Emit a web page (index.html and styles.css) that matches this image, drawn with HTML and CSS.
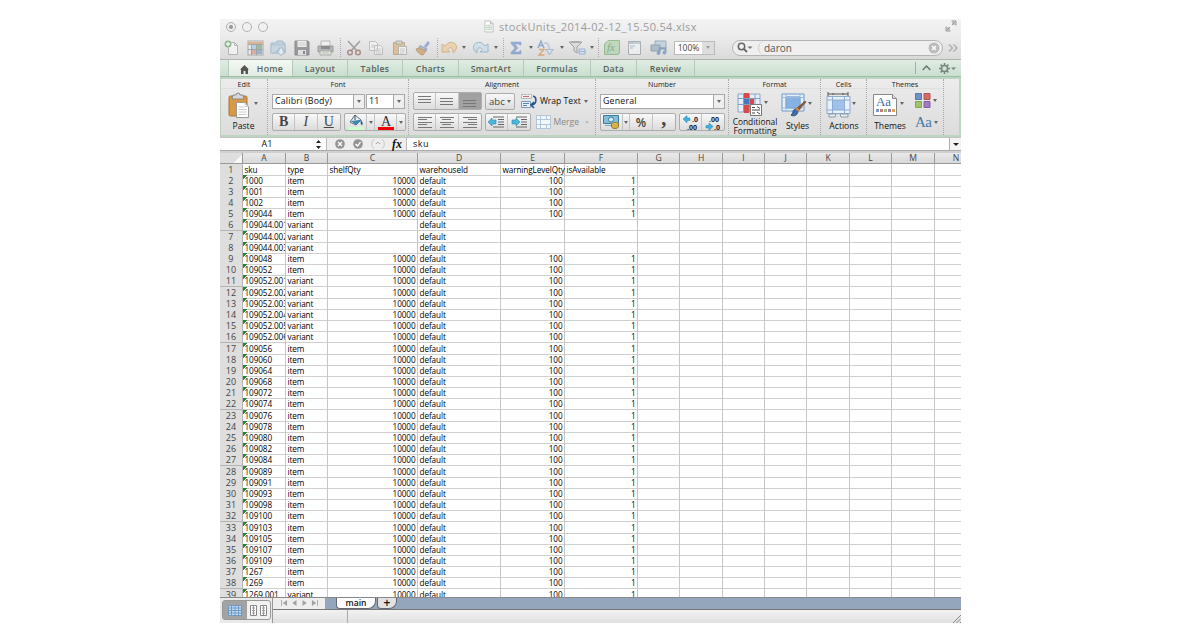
FILE: index.html
```html
<!DOCTYPE html>
<html lang="en">
<head>
<meta charset="utf-8">
<title>stockUnits_2014-02-12_15.50.54.xlsx</title>
<link rel="stylesheet" href="styles.css">
</head>
<body>
<main class="window">
  <header class="titlebar">
    <div class="lights"><i class="light dot"></i><i class="light"></i><i class="light"></i></div>
    <div class="title"><svg width="10" height="13" viewBox="0 0 11 13"><path d="M1 .5h6l3 3v9H1z" fill="#fff" stroke="#bbb"/><path d="M7 .5v3h3" fill="#ddd" stroke="#bbb"/><path d="M3 5h5v5H3zM3 7.5h5M5.500 5v5" fill="none" stroke="#bcd3be"/></svg><span>stockUnits_2014-02-12_15.50.54.xlsx</span></div>
    <svg class="expand" width="12" height="12" viewBox="0 0 12 12"><path d="M6.500 1h4.500v4.500M11 1 7 5M8 1v3h3M1 6.500V11h4.500M1 11l4-4M1 8h3v3" fill="none" stroke="#999"/></svg>
  </header>

  <div class="toolbar">
    <svg class="ghost" width="16" height="16" viewBox="0 0 16 16"><path d="M4.500 2.500h6l3 3v9h-9z" fill="#fafafa" stroke="#999"/><path d="M10.500 2.500v3h3" fill="none" stroke="#999"/><circle cx="4" cy="4" r="3.500" fill="#5f9d63"/><path d="M4 2v4M2 4h4" stroke="#fff" stroke-width="1.300"/></svg>
    <svg class="ghost" width="17" height="16" viewBox="0 0 17 16"><rect x="1" y="1" width="15" height="14" fill="#eee" stroke="#888"/><path d="M1 2h15v2H1z" fill="#d5955a"/><path d="M5 5h4v4H5z" fill="#9cc2dd"/><path d="M10 5h5v4h-5z" fill="#6aa873"/><path d="M5 10h4v4H5z" fill="#d88d7a"/><path d="M10 10h5v4h-5z" fill="#6b9bc9"/><path d="M1 4.500h15M1 9.500h15M4.500 4v11M9.500 4v11" stroke="#7a8084" fill="none"/></svg>
    <svg class="ghost" width="17" height="16" viewBox="0 0 17 16"><path d="M1 3h5l1-2h6v2h2v10H1z" fill="#a9c2d6" stroke="#86a4bd"/><path d="M1 5h14v8H1z" fill="#b8cfe0" stroke="#8eacc4"/><path d="M9 8h4v3h2.500l-4.500 4.500L6.500 11H9z" fill="#e7f1f8" stroke="#6b9bc0"/></svg>
    <svg class="ghost" width="16" height="16" viewBox="0 0 16 16"><path d="M1 1h13l1 1v13H1z" fill="#6d6d74" stroke="#55555c"/><path d="M3.500 1h9v6h-9z" fill="#f2f2f2"/><path d="M4 10h8v5H4z" fill="#ddd"/><path d="M9 11h2v3H9z" fill="#555"/><path d="M4.500 3h7M4.500 5h7" stroke="#bbb"/></svg>
    <svg class="ghost" width="17" height="16" viewBox="0 0 17 16"><path d="M4 1h9v6H4z" fill="#f7f7f7" stroke="#999"/><path d="M1 6h15v6H1z" fill="#999" stroke="#777"/><path d="M4 6h9v3H4z" fill="#555"/><path d="M3 11h11v4H3z" fill="#eef2e9" stroke="#888"/><path d="M5 13h7" stroke="#8bb07b"/></svg>
    <i class="sep"></i>
    <svg class="ghost" width="16" height="16" viewBox="0 0 16 16"><path d="M2 1 11 11M14 1 5 11" stroke="#777" stroke-width="1.600"/><circle cx="4" cy="12.500" r="2.300" fill="none" stroke="#905a50" stroke-width="1.500"/><circle cx="12" cy="12.500" r="2.300" fill="none" stroke="#905a50" stroke-width="1.500"/></svg>
    <svg class="ghost" width="16" height="16" viewBox="0 0 16 16"><path d="M1.500 1.500h6l2 2v7h-8zM6.500 5.500h6l2 2v7h-8z" fill="#f7f7f7" stroke="#aaa"/><path d="M3 5h3M3 7h3M8 9h5M8 11h5M8 13h5" stroke="#bbb"/></svg>
    <svg class="ghost" width="16" height="16" viewBox="0 0 16 16"><path d="M1.500 2.500h11v12h-11z" fill="#d9ac6c" stroke="#a98858"/><path d="M4 1h6v3H4z" fill="#ccc" stroke="#888"/><path d="M6.500 6.500h8v8h-8z" fill="#f9f9f9" stroke="#999"/><path d="M8 9h5M8 11h5M8 13h4" stroke="#bbb"/></svg>
    <svg class="ghost" width="16" height="16" viewBox="0 0 16 16"><path d="m9 6 4-5 2 2-4 5z" fill="#6c8ac8"/><path d="M5 5.500 12 9l-1 2-7-3z" fill="#8fa3d2" stroke="#6b7899"/><path d="M4 8 1 9c1 3 4 6 7 6l3-4z" fill="#c69050" stroke="#a27640"/></svg>
    <i class="sep"></i>
    <svg class="ghost" width="18" height="14" viewBox="0 0 18 14"><path d="M1 3v8h8L6.500 8.500C9 5.500 12.500 6 12 12c6-4 4-12-4-10.500L4 5z" fill="#f0c892" stroke="#c99553"/></svg><i class="arr"></i>
    <svg class="ghost" width="18" height="14" viewBox="0 0 18 14"><path d="M17 3v8H9l2.500-2.500C9 5.500 5.500 6 6 12 0 8 2 0 10 1.500L14 5z" fill="#c5dced" stroke="#6fa0c2"/></svg><i class="arr"></i>
    <i class="sep"></i>
    <svg class="ghost" width="12" height="14" viewBox="0 0 12 14"><path d="M1 1h10v3H9.500L9 3H5l3 4-4 4h5.500l.5-1.500h1V13H1v-1.500L5 7 1 2.500z" fill="#6589c9" stroke="#557ab8" stroke-width=".5"/></svg><i class="arr"></i>
    <svg class="ghost" width="18" height="16" viewBox="0 0 18 16"><path d="m1 8 3-7 3 7M2 5.500h4" fill="none" stroke="#5e86bd" stroke-width="1.400"/><path d="M2 9.500h5L2 15h5.500" fill="none" stroke="#cf8a3e" stroke-width="1.400"/><path d="M7 3c4-1 5 2 5.500 7M9 9.500l3.500 5 3.500-5z" stroke="#88a7c7" fill="#dbe6f0" stroke-width="1.200"/></svg><i class="arr"></i>
    <svg class="ghost" width="18" height="16" viewBox="0 0 18 16"><path d="M1 2h13L9 7v6l-3-2V7z" fill="#d4d6d8" stroke="#777"/><path d="M3 2h9" stroke="#666"/><path d="M11 9h6v5h-6zM11 11.500h6" fill="#d7e5f2" stroke="#6a97c6"/></svg><i class="arr"></i>
    <i class="sep"></i>
    <svg class="ghost" width="16" height="15" viewBox="0 0 16 15"><path d="M4 .5h11.500V12a2.500 2.500 0 0 1-2.500 2.500H.5V4z" fill="#a9d0a6" stroke="#62a05f"/><text x="3" y="11" font-family="Liberation Serif" font-style="italic" font-size="11" fill="#4b8a4b">fx</text></svg>
    <svg class="ghost" width="14" height="16" viewBox="0 0 14 16"><path d="M.5 1.500h12v13H.5z" fill="#f3f4f5" stroke="#8a8e92"/><path d="M1 2h11v2H1z" fill="#b0bcc8"/><path d="M2 3h3M2 6h5M2 8h3" stroke="#8aa0b7"/></svg>
    <svg class="ghost" width="17" height="16" viewBox="0 0 17 16"><path d="M5 1h11v7H5z" fill="#b3c9d9" stroke="#6d8ba2"/><path d="M1 5h9v6H1z" fill="#8ca4b5" stroke="#627d92"/><path d="M9.500 13V8.500h6V12" fill="none" stroke="#4a79b0" stroke-width="1.800"/><circle cx="8.500" cy="13" r="2" fill="#5d86ba"/><circle cx="14.500" cy="12.500" r="2" fill="#5d86ba"/></svg>
    <div class="zoom"><span>100%</span><b><i class="arr"></i></b></div>
    <div class="search"><div class="lens"><svg width="16" height="11" viewBox="0 0 16 11"><circle cx="4.500" cy="4.500" r="3.200" fill="none" stroke="#666" stroke-width="1.500"/><path d="m7 7 3 3" stroke="#666" stroke-width="1.800"/><path d="M10.500 4.500h5L13 7z" fill="#777"/></svg></div><div class="query">daron</div><svg width="12" height="12" viewBox="0 0 12 12"><circle cx="6" cy="6" r="5.500" fill="#bbb"/><path d="m4 4 4 4m0-4L4 8" stroke="#fff" stroke-width="1.400"/></svg></div>
    <svg width="10" height="8" viewBox="0 0 10 8"><path d="m1 .5 3.500 3.500L1 7.500M5.500.5 9 4 5.500 7.500" fill="none" stroke="#aaa" stroke-width="1.300"/></svg>
  </div>

  <nav class="tabs">
    <span class="lead"></span>
    <span class="tab home"><svg width="9" height="9" viewBox="0 0 9 9"><path d="M4.500 0 9 4.500H8V9H5.500V6h-2v3H1V4.500H0z" fill="#555"/></svg>Home</span>
    <span class="tab t55">Layout</span><span class="tab t55">Tables</span><span class="tab t56">Charts</span><span class="tab t65">SmartArt</span><span class="tab t67">Formulas</span><span class="tab t46">Data</span><span class="tab t58">Review</span>
    <span class="tabtools"><svg width="9" height="6" viewBox="0 0 9 6"><path d="m.7 5 3.800-4 3.800 4" fill="none" stroke="#66736a" stroke-width="1.400"/></svg><svg width="17" height="11" viewBox="0 0 17 11"><circle cx="5.500" cy="5.500" r="3" fill="none" stroke="#77827a" stroke-width="1.500"/><path d="M5.500 0v2m0 7v2M0 5.500h2m7 0h2M1.600 1.600 3 3m5 5 1.400 1.400M9.400 1.600 8 3M3 8 1.600 9.400" stroke="#77827a" stroke-width="1.500"/><path d="M12 4.500h5L14.500 7z" fill="#77827a"/></svg></span>
  </nav>

  <section class="ribbon">
    <div class="group edit"><h2>Edit</h2>
      <div class="big"><div class="icons"><svg width="22" height="27" viewBox="0 0 22 27"><rect x="1" y="4" width="18" height="20" rx="1.500" fill="#d89b43" stroke="#a87430"/><path d="M5 3h3a2 2 0 0 1 4 0h3l1 4H4z" fill="#d5d7da" stroke="#888"/><path d="M8.500 10.500H17l3.500 4v11h-12z" fill="#fff" stroke="#999"/><path d="M17 10.500v4h3.500M10.500 15h6M10.500 17.500h8M10.500 20h8M10.500 22.500h8" fill="none" stroke="#ccc"/></svg><i class="arr"></i></div><p>Paste</p></div>
    </div>
    <div class="group font"><h2>Font</h2>
      <div class="row"><div class="combo name"><span>Calibri (Body)</span><b><i class="arr"></i></b></div><div class="combo size"><span>11</span><b><i class="arr"></i></b></div></div>
      <div class="row"><div class="seg biu"><span class="w22"><b>B</b></span><span class="w22"><i>I</i></span><span class="w22"><u>U</u></span></div>
        <div class="seg"><span class="w22"><svg width="16" height="16" viewBox="0 0 16 16"><path d="m7 1 6 5-5 5-6-3z" fill="#e8f1f7" stroke="#4d6f86"/><path d="m3 7 8-1 2 0-5 5z" fill="#3d86b0"/><path d="M13 6c2 2 2 5 1 5s-2-2-1-5" fill="#1b5d8a"/><path d="M7 1v5" stroke="#444"/><path d="M0 13h16v3H0z" fill="#ccffcc"/></svg></span><span class="w8"><i class="arr"></i></span><span class="w22"><svg width="16" height="16" viewBox="0 0 16 16"><text x="3" y="11.500" font-family="Liberation Serif" font-size="14" fill="#333">A</text><path d="M0 13h16v3H0z" fill="#f00000"/></svg></span><span class="w8"><i class="arr"></i></span></div></div>
    </div>
    <div class="group align"><h2>Alignment</h2>
      <div class="row"><div class="seg"><span class="w22"><i class="ln up"></i></span><span class="w22"><i class="ln"></i></span><span class="w22 on"><i class="ln low"></i></span></div><div class="seg abc"><span>abc<i class="arr"></i></span></div>
        <div class="tool"><svg width="17" height="16" viewBox="0 0 17 16"><path d="M.5 1.500h10v4H.5z" fill="#f4eded" stroke="#99a9bd" stroke-dasharray="2 1"/><path d="M2 3.500h6" stroke="#c96c6c"/><path d="M.5 8.500h9v6h-9z" fill="#eaf1fa" stroke="#789abf"/><path d="M2 10.500h6M2 12.500h4" stroke="#5880b0"/><path d="M12 3c4 1 4 8-1 9M13 9l-3 3 3 3" fill="none" stroke="#26558e" stroke-width="1.600"/></svg><span>Wrap Text</span><i class="arr"></i></div></div>
      <div class="row"><div class="seg"><span class="w22"><i class="ln four left"></i></span><span class="w22"><i class="ln four mid"></i></span><span class="w22"><i class="ln four right"></i></span></div>
        <div class="seg"><span class="w22"><svg width="17" height="12" viewBox="0 0 17 12"><path d="M5 1h11M10 3.500h6M10 6h6M10 8.500h6M5 11h11" stroke="#666"/><path d="M0 6 4 2v2h4v4H4v2z" fill="#4eb7dc" stroke="#2589b2" stroke-width=".6"/></svg></span><span class="w22"><svg width="17" height="12" viewBox="0 0 17 12"><path d="M5 1h11M10 3.500h6M10 6h6M10 8.500h6M5 11h11" stroke="#666"/><path d="m9 6-4-4v2H1v4h4v2z" fill="#4eb7dc" stroke="#2589b2" stroke-width=".6"/></svg></span></div>
        <div class="tool off"><svg width="16" height="14" viewBox="0 0 16 14"><path d="M.5.5h14v13H.5zM.5 4.500h14M.5 9.500h14M4.500.5v13M10.500.5v4m0 5v4" fill="#f2f7fb" stroke="#b3c6d8"/></svg><span>Merge</span><i class="arr"></i></div></div>
    </div>
    <div class="group number"><h2>Number</h2>
      <div class="row"><div class="combo general"><span>General</span><b><i class="arr"></i></b></div></div>
      <div class="row"><div class="seg"><span class="w22"><svg width="17" height="14" viewBox="0 0 17 14"><path d="M.5.5h15v8H.5z" fill="#86bdd9" stroke="#397b9e"/><circle cx="8" cy="4.500" r="2.500" fill="#d8edf6" stroke="#397b9e"/><path d="M2 10.500h6" stroke="#8aa"/><ellipse cx="12" cy="9" rx="3.500" ry="1.500" fill="#e7c75b" stroke="#94782c"/><path d="M8.500 9v3c1 2 6 2 7 0V9" fill="#d8b04a" stroke="#94782c"/></svg></span><span class="w7"><i class="arr"></i></span><span class="w22 pct">%</span><span class="w22 comma">,</span></div>
        <div class="seg dec"><span class="w22"><svg width="18" height="15" viewBox="0 0 18 15"><path d="M1 4 5 .5V3h3v2.500H5V8z" fill="#41aedb" stroke="#2388b1" stroke-width=".5"/><text x="10" y="7">.0</text><text x="5" y="14.500">.00</text></svg></span><span class="w22"><svg width="18" height="15" viewBox="0 0 18 15"><text x="5" y="7">.00</text><path d="m9 11.500-4-3.500v2.500H2V13h3v2.500z" fill="#41aedb" stroke="#2388b1" stroke-width=".5"/><text x="10" y="14.500">.0</text></svg></span></div></div>
    </div>
    <div class="group format"><h2>Format</h2>
      <div class="pair"><div class="big two"><div class="icons"><svg width="26" height="25" viewBox="0 0 26 25"><path d="M1 2h22v18H1z" fill="#e5f0fa" stroke="#8aa6c6"/><path d="M7 1h5v6H7zM7 13h5v8H7z" fill="#d84a47"/><path d="M7 7h10v6H7z" fill="#4778be"/><path d="M12 7h5v6h-5z" fill="#d84a47"/><path d="M1 6.500h22M1 12.500h22M6.500 2v18M12.500 2v18M18 2v18" stroke="#7f9fc3" fill="none"/><path d="M13.500 12.500h11v11h-11z" fill="#fff" stroke="#777"/><path d="M15 15.500h3m2-1 3 2M15 18h8M15 21h3m2-1 3 2" stroke="#444" fill="none"/></svg><i class="arr"></i></div><p>Conditional<br>Formatting</p></div>
      <div class="big sty"><div class="icons"><svg width="27" height="26" viewBox="0 0 27 26"><path d="M1 2h22v17H1z" fill="#e5f0fa" stroke="#6f97c7"/><path d="M5 5h14v11H5z" fill="#85b2e4" stroke="#5685bd"/><path d="M5 2v17M19 2v17M1 5.500h22M1 16h22" stroke="#9bb9db" fill="none"/><path d="m25 10-8 9-2-2 9-8z" fill="#8b5a34" stroke="#5f3b1d" stroke-width=".6"/><path d="M15 17c-4 0-2 4-5 6 3 2 7 0 7-4z" fill="#3c6fae" stroke="#274c7c"/><path d="m15 16 3 3" stroke="#d98c35" stroke-width="2"/></svg><i class="arr"></i></div><p>Styles</p></div></div>
    </div>
    <div class="group cells"><h2>Cells</h2>
      <div class="big"><div class="icons"><svg width="26" height="26" viewBox="0 0 26 26"><path d="M1 4.500h23v17H1z" fill="#e7f1fb" stroke="#8fabcf"/><path d="M6 8h13v10H6z" fill="#9fc2ea"/><path d="M6.500 4v18M18.500 4v18M1 8h23M1 18h23" stroke="#8fabcf" fill="none"/><path d="M2 2h20M2 0v4M22 0v4M7 1v2M17 1v2" stroke="#555"/><path d="M3 22h7l-1 3H3zM14 22h8v3h-7z" fill="#eee" stroke="#8599ad"/></svg><i class="arr"></i></div><p>Actions</p></div>
    </div>
    <div class="group themes"><h2>Themes</h2>
      <div class="pair"><div class="big"><div class="icons"><svg width="25" height="22" viewBox="0 0 25 22"><path d="M.5.500h19l4 4v17H.5z" fill="#fff" stroke="#888"/><path d="M19.500.500v4h4" fill="#ddd" stroke="#888"/><text x="3" y="12" font-family="Liberation Serif" font-size="13" fill="#386ea6" textLength="15">Aa</text><path d="M3 15h3v3H3z" fill="#7c96c9"/><path d="M7 15h3v3H7z" fill="#c97979"/><path d="M11 15h3v3h-3z" fill="#9fbc6f"/><path d="M15 15h3v3h-3z" fill="#9b7db8"/><path d="M19 15h3v3h-3z" fill="#e0a252"/></svg><i class="arr"></i></div><p>Themes</p></div>
      <div class="mini"><div><svg width="16" height="15" viewBox="0 0 16 15"><path d="M.5.500h6v6h-6z" fill="#6f93c4" stroke="#547bad"/><path d="M9 .500h6v6H9z" fill="#d66c6a" stroke="#b5504f"/><path d="M.5 8.500h6v6h-6z" fill="#a0c46b" stroke="#80a64f"/><path d="M9 8.500h6v6H9z" fill="#a37bc0" stroke="#845da2"/></svg><i class="arr"></i></div><div><em>Aa</em><i class="arr"></i></div></div></div>
    </div>
  </section>

  <div class="formula">
    <div class="ref">A1</div>
    <svg class="stepper" width="5" height="9" viewBox="0 0 5 9"><path d="M2.500 0 5 3H0zM2.500 9 5 6H0z" fill="#222"/></svg>
    <div class="fxtools"><svg width="10" height="10" viewBox="0 0 10 10"><circle cx="5" cy="5" r="4.800" fill="#949494"/><path d="m3 3 4 4m0-4L3 7" stroke="#fff" stroke-width="1.300"/></svg><svg width="10" height="10" viewBox="0 0 10 10"><circle cx="5" cy="5" r="4.800" fill="#949494"/><path d="m2.500 5 2 2 3-4" stroke="#fff" stroke-width="1.300" fill="none"/></svg><svg width="14" height="12" viewBox="0 0 14 12"><path d="M3 1C0 4 0 8 3 11M11 1c3 3 3 7 0 10" fill="none" stroke="#c5c5c5"/><path d="M5 6c1-2 3-2 4 0" stroke="#999" fill="none"/></svg><strong>fx</strong></div>
    <div class="value">sku</div><b class="drop"><i class="arr dark"></i></b>
  </div>

  <div class="sheet" id="sheet"></div>

  <footer class="footer">
    <div class="views"><div class="viewbox"><span class="sel"><svg width="14" height="11" viewBox="0 0 14 11"><path d="M.5.500h13v10H.5zM.5 3h13M.5 5.500h13M.5 8h13M3.500.500v10M7 .500v10M10.500.500v10" fill="#c4ddf3" stroke="#6e99c3"/></svg></span><span><svg width="17" height="11" viewBox="0 0 17 11"><path d="M.5.500h6v10h-6zM10.500.500h6v10h-6z" fill="#fff" stroke="#888"/><path d="M2 3h3M2 5.500h3M2 8h3M12 3h3M12 5.500h3M12 8h3M3.500 1v9M13.500 1v9" stroke="#999"/></svg></span></div></div>
    <div class="bottom">
      <div class="sheettabs"><div class="nav"><svg width="43" height="6" viewBox="0 0 43 7"><path d="M0 0h1v7H0zM7 0v7L2 3.500zM18 0v7l-5-3.500zM25 0v7l5-3.500zM36 0v7l5-3.500zM42 0h1v7h-1z" fill="#a2a2a2"/></svg></div>
        <div class="stabs"><span class="stab">main</span><span class="stab plus">+</span></div></div>
      <div class="status"><span></span><svg width="9" height="9" viewBox="0 0 9 9"><path d="m0 9 9-9M3.500 9 9 3.500M7 9l2-2" stroke="#888"/></svg></div>
    </div>
  </footer>
</main>
<script src="sheet.js"></script>
</body>
</html>
```
FILE: styles.css
```css
* { box-sizing: border-box; }
body { margin: 0; background: #fff; font-family: "Open Sans", "Noto Sans", sans-serif; color: #111; }
svg { display: block; flex: none; overflow: visible; }
h2, p { margin: 0; font-weight: 400; }
.window { width: 741px; height: 604px; margin: 19px 0 0 220px; display: flex; flex-direction: column; overflow: hidden; }
.arr { display: block; flex: none; width: 0; height: 0; border: 2.5px solid transparent; border-top: 3.500px solid #666; border-bottom: 0; }
.arr.dark { border-top-color: #222; border-left-width: 3px; border-right-width: 3px; }

.titlebar { height: 17px; flex: none; background: linear-gradient(#f3f3f3, #ececec); display: grid; grid-template-columns: 264px 1fr 16px; }
.lights { display: flex; gap: 6px; padding: 3px 0 0 6px; }
.light { width: 10px; height: 10px; border: 1px solid #b0b0b0; border-radius: 50%; background: #f0f0f0; }
.light.dot { background: radial-gradient(#999 1.500px, #eee 2.500px); }
.title { display: flex; gap: 5px; align-items: center; height: 15px; color: #9c9c9c; font-size: 11px; letter-spacing: .32px; white-space: nowrap; }
.expand { margin-top: 1px; }

.toolbar { height: 24px; flex: none; background: linear-gradient(#ececec, #dadada); display: grid; align-items: center; justify-items: center; border-bottom: 1px solid #b0b5b1;
  grid-template-columns: 23px 24px 23px 24px 23px 6px 21px 24px 23px 24px 5px 20px 8px 23px 9px 6px 20px 9px 22px 9px 22px 8px 5px 22px 24px 23px 49px 228px 12px; }
.ghost { opacity: .62; }
.sep { width: 0; height: 19px; border-left: 1px dotted #aaa; }
.zoom { width: 41px; height: 14px; display: flex; background: #fff; border: 1px solid #bbb; font-size: 8.500px; line-height: 12px; color: #444; }
.zoom span { flex: 1; text-align: center; }
.zoom b { width: 12px; background: #ddd; display: grid; place-items: center; }
.zoom .arr { border-top-color: #999; }
.search { width: 211px; height: 16px; border: 1px solid #b4b4b4; border-radius: 8px; background: #efefef; display: flex; align-items: center; justify-self: end; margin-right: 4px; padding-right: 2px; }
.lens { width: 25px; padding-left: 4px; }
.query { flex: 1; height: 14px; border-left: 1px solid #ccc; border-radius: 7px 0 0 7px; padding-left: 5px; font-size: 10px; line-height: 14px; color: #555; }

.tabs { height: 17px; flex: none; display: flex; background: linear-gradient(#e0ece2, #c9dfcf); border-bottom: 1px solid #9fbca7; font-size: 8.700px; font-weight: 600; color: #58615b; letter-spacing: .3px; }
.lead { width: 9px; border-right: 1px solid #b7ccbc; }
.tab { display: flex; align-items: center; justify-content: center; border-right: 1px solid #b4c9ba; padding-top: 2px; }
.home { width: 64px; gap: 8px; padding-left: 2px; background: linear-gradient(#f3f8f3, #e2ece3); }
.t55 { width: 55px; } .t56 { width: 56px; } .t65 { width: 65px; } .t67 { width: 67px; } .t46 { width: 46px; } .t58 { width: 58px; }
.tabtools { margin: 2px 3px 2px auto; width: 43px; border-left: 1px solid #9eb0a3; display: flex; align-items: center; gap: 8px; padding-left: 6px; }

.ribbon { height: 60px; flex: none; display: flex; background: linear-gradient(#ececec, #dcdcdc); border: 2px solid #bdd4c3; border-width: 2px 2px 2px 1px; }
.group { border-right: 1px dotted #a8a8a8; display: flex; flex-direction: column; padding: 1px 0 0 4px; }
.group h2 { height: 9px; line-height: 9px; font-size: 7.200px; text-align: center; color: #222; margin: 0 0 0 -4px; flex: none; border-bottom: 1px solid #e0e0e0; }
.edit { width: 47px; } .font { width: 141px; } .align { width: 187px; } .number { width: 133px; } .format { width: 92px; } .cells { width: 46px; } .themes { width: 77px; }
.row { display: flex; height: 18px; align-items: center; margin-top: 3px; flex: none; }
.combo { height: 15px; border: 1px solid #a9a9a9; background: #fff; display: flex; font-size: 8.800px; line-height: 13px; color: #111; }
.combo span { flex: 1; padding-left: 2px; white-space: nowrap; letter-spacing: .2px; }
.combo b { width: 11px; border-left: 1px solid #aaa; background: #efefef; display: grid; place-items: center; }
.name { width: 93px; margin-right: 1px; } .size { width: 39px; } .general { width: 125px; }
.seg { height: 18px; display: flex; border: 1px solid #adadad; border-radius: 2px; background: linear-gradient(#f8f8f8, #dcdcdc); margin-right: 3px; }
.seg span { display: flex; align-items: center; justify-content: center; border-right: 1px solid #c3c3c3; }
.seg span:last-child { border-right: 0; }
.w22 { width: 22.300px; } .w8 { width: 8px; } .w7 { width: 7px; }
.biu { font: 14px "Liberation Serif", serif; color: #444; }
.seg .on { background: #a1a1a1; }
.ln { display: block; width: 13px; height: 7px; background: repeating-linear-gradient(#777 0 1px, transparent 1px 3px); }
.up { margin-bottom: 4px; } .low { margin-top: 5px; }
.ln.four { height: 11px; width: 14px; background: linear-gradient(#777, #777) 0 0/14px 1px, linear-gradient(#777, #777) 0 2.500px/9px 1px, linear-gradient(#777, #777) 0 5px/14px 1px, linear-gradient(#777, #777) 0 7.500px/9px 1px, linear-gradient(#777, #777) 0 10px/14px 1px; background-repeat: no-repeat; }
.ln.mid { background-position: 50% 0, 50% 2.500px, 50% 5px, 50% 7.500px, 50% 10px; }
.ln.right { background-position: 100% 0, 100% 2.500px, 100% 5px, 100% 7.500px, 100% 10px; }
.abc { width: 30px; height: 17px; font-size: 9.500px; color: #444; }
.abc span { gap: 2px; width: 28px; }
.tool { display: flex; align-items: center; gap: 2px; margin-left: 3px; font-size: 8.600px; white-space: nowrap; }
.tool .arr { margin-left: 1px; }
.tool.off { color: #888; gap: 1px; margin-left: 2px; } .off .arr { border-top-color: #bbb; margin-left: 5px; }
.pct { font-size: 12px; color: #444; font-weight: 600; } .comma { font: bold 20px/4px "Liberation Serif", serif; color: #444; padding-bottom: 9px; }
.dec { font: bold 7px "Open Sans", sans-serif; }
.dec text { fill: #222; }
.big { display: flex; flex-direction: column; font-size: 8.600px; }
.icons { height: 30px; display: flex; align-items: center; gap: 4px; padding-top: 2px; flex: none; }
.icons .arr { margin-top: -3px; }
.big p { line-height: 11px; text-align: center; white-space: nowrap; margin-left: -4px; padding-top: 2px; }
.pair { display: flex; }
.edit .icons { padding-left: 3px; } .edit p { padding-right: 1px; }
.two { width: 48px; } .two .icons { padding-left: 4px; gap: 1px; height: 28px; } .two p { font-size: 8.400px; line-height: 8.500px; margin-left: -4px; padding-top: 1px; }
.sty { width: 39px; } .sty .icons { gap: 0; } .sty p { margin-left: -6px; }
.cells .icons { padding-left: 1px; gap: 0; } .cells p { margin-left: -3px; }
.themes .big { width: 43px; } .themes .icons { padding-left: 2px; gap: 2px; } .themes p { margin-left: 0; padding-right: 5px; }
.mini { padding-left: 1px; }
.mini div { height: 22px; display: flex; align-items: center; gap: 2px; }
.mini em { font: 15px "Liberation Serif", serif; color: #4878a8; letter-spacing: -.500px; width: 17px; }

.formula { height: 14px; flex: none; display: flex; align-items: center; background: #fff; border-bottom: 1px solid #aaa; border-top: 1px solid #c4c4c4; font-size: 9px; line-height: 12px; }
.ref { width: 94px; text-align: center; } .stepper { margin: 0 5px 0 2px; }
.fxtools { width: 81px; height: 12px; background: #eee; border: solid #bbb; border-width: 0 1px; display: flex; align-items: center; gap: 8px; padding-left: 8px; }
.fxtools strong { font: italic bold 12px/12px "Liberation Serif", serif; margin-left: -1px; }
.value { flex: 1; padding-left: 6px; letter-spacing: .5px; }
.drop { width: 12px; height: 12px; border-left: 1px solid #aaa; display: grid; place-items: center; background: #f4f4f4; }

.sheet { height: 446px; flex: none; overflow: hidden; border-top: 2px solid #d0d0d0; background: #fff; }
.line { display: grid; height: 11.200px; grid-template-columns: 23px 43px 42px 90px 83px 64px 73px 42px 43px 42px 42px 43px 42px 43px 26px; }
.line span { border-right: 1px solid #c6c6c6; border-bottom: 1px solid #cfcfcf; font: 500 8.200px/11px "Open Sans", sans-serif; letter-spacing: -.1px; color: #000; white-space: nowrap; padding-left: 1.500px; min-width: 0; }
.line span:last-child { border-right: 0; }
.line .num { text-align: right; padding: 0 1.500px 0 0; }
.line .rh { background: #dedede; color: #444; text-align: center; font-size: 9px; letter-spacing: .2px; line-height: 11px; padding: 0; border-color: #b5b5b5; }
.line.head { height: 10.500px; }
.line.head span { background: linear-gradient(#e9e9e9, #d9d9d9); color: #444; text-align: center; padding: 0; font-size: 8.600px; line-height: 10px; border-color: #999; }
.line.head span:last-child { text-align: right; padding-right: 2px; }
.line.head span.corner { background: linear-gradient(135deg, #dedede 75%, #f8f8f8 75%); }
.line .txt { overflow: hidden; background: linear-gradient(135deg, #28852f 2.800px, transparent 3.300px); }

.footer { height: 27px; flex: none; display: flex; border-top: 1px solid #888; }
.views { width: 53px; background: #e9e9e9; border-right: 1px solid #999; padding: 2px 2px; }
.viewbox { display: flex; height: 20px; width: 49px; border: 1px solid #999; border-radius: 3px; background: #f1f1f1; }
.viewbox span { flex: 1; display: grid; place-items: center; } .viewbox .sel { background: #a3a3a3; }
.bottom { flex: 1; display: flex; flex-direction: column; }
.sheettabs { height: 12px; display: flex; background: #94a6bb; border-bottom: 1px solid #777; }
.nav { width: 52px; background: #eee; padding: 2px 0 0 5px; }
.stabs { display: flex; padding-left: 11px; align-items: flex-start; }
.stab { width: 40px; height: 11px; background: #fff; border-radius: 0 0 8px 4px; text-align: center; font-size: 8.600px; font-weight: 600; line-height: 10px; border: 1px solid #667; border-top: 0; }
.plus { width: 20px; margin-left: 1px; background: #e2e2e2; font-size: 12px; }
.status { height: 14px; display: flex; background: linear-gradient(#f2f2f2, #dfdfdf); justify-content: space-between; align-items: flex-end; }
.status span { width: 75px; height: 14px; border-right: 1px solid #aaa; }
```
FILE: sheet.js
```js
const skus = ["1000", "1001", "1002", "109044", "109044.001", "109044.002", "109044.003", "109048", "109052",
  "109052.001", "109052.002", "109052.003", "109052.004", "109052.005", "109052.006", "109056", "109060", "109064",
  "109068", "109072", "109074", "109076", "109078", "109080", "109082", "109084", "109089", "109091", "109093",
  "109098", "109100", "109103", "109105", "109107", "109109", "1267", "1269", "1269.001"];
const sheet = document.getElementById("sheet");

function addLine(cells, classes, extra) {
  const line = document.createElement("div");
  line.className = "line" + (extra ? " " + extra : "");
  for (let i = 0; i < 15; i++) {
    const cell = document.createElement("span");
    cell.textContent = cells[i] || "";
    if (classes[i]) cell.className = classes[i];
    line.append(cell);
  }
  sheet.append(line);
}

addLine(["", ..."ABCDEFGHIJKLMN"], ["corner"], "head");
addLine(["1", "sku", "type", "shelfQty", "warehouseId", "warningLevelQty", "isAvailable"], ["rh"]);
skus.forEach((sku, i) => {
  const blank = sku.startsWith("109044.");
  addLine([String(i + 2), sku, sku.includes(".") ? "variant" : "item", blank ? "" : "10000", "default",
    blank ? "" : "100", blank ? "" : "1"], ["rh", "txt", "", "num", "", "num", "num"]);
});
```
